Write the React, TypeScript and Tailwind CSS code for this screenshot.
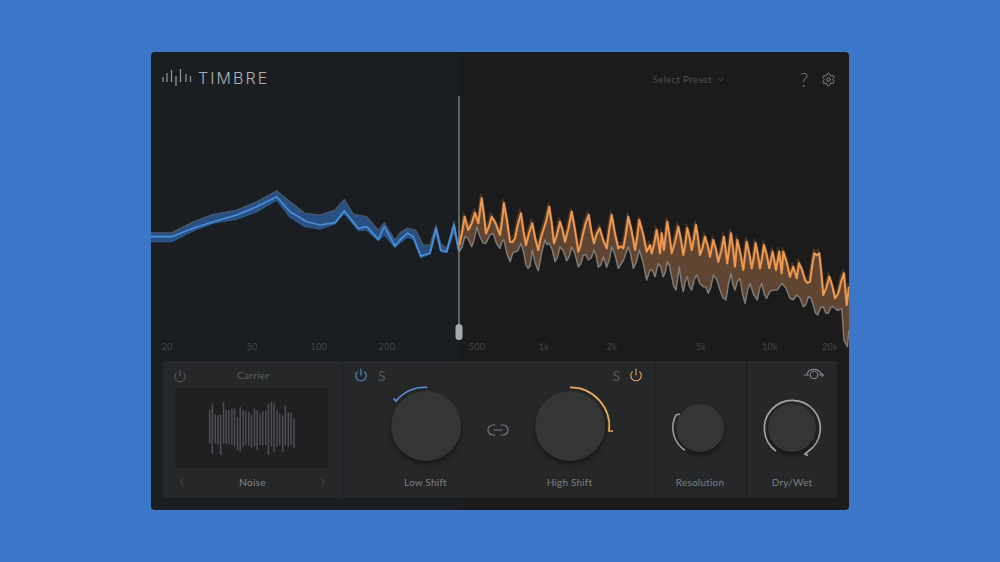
import React from 'react';
import { ChevronDown, ChevronLeft, ChevronRight, Link2, Power, Settings } from 'lucide-react';

type Pt = number[];

// traced from the reference at 3x: each block has its own crop origin
const scale = (ox: number, oy: number, pts: Pt[]) => pts.map(([x, y]) => [ox + x / 3, oy + y / 3]);
const line = (pts: Pt[]) => pts.map(([x, y]) => `${x.toFixed(1)},${y.toFixed(1)}`).join(' ');
const band = (a: Pt[], b: Pt[]) => line([...a, ...[...b].reverse()]);

// small wiggle between traced points, the real curve is busier than the trace
const busy = (pts: Pt[], amount: number) =>
  pts.flatMap((p, i) => {
    const next = pts[i + 1];
    if (!next || next[0] - p[0] < 4) return [p];
    return [p, [(p[0] + next[0]) / 2, (p[1] + next[1]) / 2 + (i % 2 ? -amount : amount)]];
  });

const blueTop = scale(150, 180, [[0,158],[65,158],[130,125],[190,103],[260,90],[320,65],[380,32],[420,65],[465,100],[510,105],[555,90],[583,58],[610,102],[650,110],[685,150],[703,128],[735,180],[750,158],[772,145],[797,150],[820,195],[840,195],[858,135],[872,190],[890,205],[912,125],[925,200]]);
const blueMid = scale(150, 180, [[0,170],[65,170],[130,145],[190,125],[260,105],[320,80],[380,50],[420,95],[470,125],[510,135],[555,128],[583,92],[625,145],[650,140],[685,178],[703,140],[735,198],[750,180],[772,160],[790,170],[812,228],[840,220],[858,145],[872,210],[890,215],[912,135],[926,210]]);
const blueLow = scale(150, 180, [[0,185],[65,185],[130,152],[190,130],[260,118],[320,95],[380,60],[420,112],[465,140],[510,147],[555,132],[583,100],[625,152],[650,150],[685,182],[703,165],[735,203],[750,188],[772,172],[790,178],[812,233],[840,222],[858,160],[872,215],[890,218],[912,155],[926,215]]);

const orange = busy([
  ...scale(450, 180, [[28,195],[44,110],[55,150],[75,98],[85,130],[95,55],[108,160],[125,110],[150,165],[162,70],[180,185],[195,175],[213,100],[228,195],[247,130],[265,210],[280,150],[298,80],[312,190],[330,125],[345,185],[365,95],[385,215],[398,165],[416,105],[432,190],[449,145],[470,205],[485,105],[505,205],[520,205],[535,110],[555,210],[568,120],[590,215]]),
  ...scale(650, 220, [[0,75],[5,100],[20,30],[30,100],[35,40],[42,90],[52,5],[65,100],[85,20],[100,105],[112,25],[125,90],[138,15],[150,105],[165,50],[180,110],[190,60],[205,125],[222,50],[232,130],[243,40],[255,140],[262,60],[280,150],[290,65],[305,145],[317,70],[330,145],[342,75],[358,145],[368,95],[378,150],[388,95],[395,160],[400,95],[420,170],[430,140],[440,175],[447,130],[465,180],[480,185],[493,100],[508,100],[520,225],[538,170],[555,235],[565,220],[582,160],[590,255],[597,200]]),
], 2);
const grey = busy([
  ...scale(450, 180, [[28,215],[44,170],[65,200],[80,140],[90,170],[108,190],[130,160],[150,205],[162,180],[180,245],[195,215],[213,190],[228,255],[240,258],[247,210],[265,272],[285,180],[298,190],[315,245],[330,200],[350,242],[365,200],[385,260],[400,225],[415,240],[432,210],[445,262],[460,230],[470,262],[485,200],[505,265],[535,200],[550,265],[568,210],[590,300]]),
  ...scale(650, 220, [[0,150],[15,170],[25,130],[40,170],[52,125],[65,170],[78,210],[88,140],[100,215],[112,170],[125,210],[140,165],[160,200],[175,220],[190,165],[210,210],[228,240],[243,160],[255,210],[270,175],[285,250],[300,190],[322,240],[335,190],[350,235],[370,210],[395,190],[420,235],[440,225],[460,260],[475,230],[490,255],[503,285],[520,260],[535,280],[550,260],[575,265],[582,360],[592,380],[597,330]]),
], 3);

const axis: [string, number][] = [['20', 167], ['50', 252], ['100', 319], ['200', 387], ['500', 477], ['1k', 544], ['2k', 612], ['5k', 701], ['10k', 770], ['20k', 830]];

const wave = [[180,165,265],[188,148,295],[197,178,265],[205,180,268],[213,178,300],[222,140,265],[230,165,265],[238,165,268],[247,160,270],[255,160,275],[264,185,285],[272,155,290],[281,165,275],[289,168,270],[298,170,272],[306,178,280],[315,160,275],[323,165,285],[332,175,270],[340,168,272],[349,165,270],[357,145,300],[366,140,275],[374,145,290],[383,165,275],[391,175,270],[400,180,290],[408,150,270],[417,172,275],[425,172,270],[434,190,280]];

const logoBars = [[1,8,13],[5,4,13],[9.5,1,13],[14,7,17],[18.5,0,13],[24,5,13],[28.5,7,13]];

const Spectrum = () => (
  <svg viewBox="151 96 698 265" width={698} height={265} className="block">
    <defs>
      <filter id="soft" x="-5%" y="-5%" width="110%" height="110%">
        <feGaussianBlur stdDeviation="0.6" />
      </filter>
    </defs>
    <g filter="url(#soft)" fill="none" strokeLinejoin="round">
      <polygon points={band(blueTop, blueLow)} fill="#2b5082" />
      <polyline points={line(blueTop)} stroke="#4e5a66" strokeWidth="1.1" />
      <polyline points={line(blueLow)} stroke="#2d5c94" strokeWidth="1.1" />
      <polyline points={line(blueMid)} stroke="#4a8fdc" strokeWidth="1.7" />

      <polygon points={band(orange, grey)} fill="#5f4430" />
      <polyline points={line(orange)} stroke="#7a5232" strokeWidth="1.6" transform="translate(-1 -4)" opacity="0.45" />
      <polyline points={line(grey)} stroke="#7f7b76" strokeWidth="1.5" />
      <polyline points={line(orange)} stroke="#b8743c" strokeWidth="3" opacity="0.4" />
      <polyline points={line(orange)} stroke="#ee9a52" strokeWidth="1.9" />
    </g>
    <line x1="459" y1="96" x2="459" y2="326" stroke="#a3a7aa" strokeWidth="1" />
    <rect x="455.5" y="324" width="7" height="16" rx="3.5" fill="#a7abae" />
    {axis.map(([label, x]) => (
      <text key={label} x={x} y="350" textAnchor="middle" fontSize="9" letterSpacing="0.4" fill="#434548" fontFamily="Lato, sans-serif">
        {label}
      </text>
    ))}
  </svg>
);

const Knob = ({ size, arc, color, label, labelGap }: { size: string; arc: string; color: string; label: string; labelGap: string }) => (
  <div className="flex w-[90px] flex-col items-center">
    <div className="relative flex h-[90px] w-[90px] items-center justify-center">
      <div className={`${size} rounded-full bg-[#343537] shadow-[0_3px_5px_rgba(0,0,0,0.45)]`} />
      <svg viewBox="0 0 90 90" className="absolute inset-0 h-full w-full" fill="none" stroke={color} strokeWidth="1.7">
        <path d={arc} />
      </svg>
    </div>
    <div className={`${labelGap} h-[14px] text-[10px] leading-[14px] tracking-[0.02em] text-[#7d7f82]`}>{label}</div>
  </div>
);

export default function App() {
  return (
    <div className="flex h-[562px] w-[1000px] items-center justify-center overflow-hidden bg-[#3b76c9] font-['Lato',sans-serif]">
      <div className="h-[458px] w-[698px] overflow-hidden rounded-[4px] bg-[linear-gradient(90deg,#1a1d22_308px,#1c1b1c_308px)]">
        {/* Header */}
        <div className="flex h-[44px] items-center pl-[11px] pr-[13px] pt-[8px]">
          <svg width="30" height="18" viewBox="0 0 30 18" stroke="#8f9193" strokeWidth="1.3">
            {logoBars.map(([x, y1, y2]) => (
              <line key={x} x1={x} x2={x} y1={y1} y2={y2} />
            ))}
          </svg>
          <span className="ml-[6px] font-['Inter',sans-serif] text-[16px] font-light tracking-[0.13em] text-[#aeb0b3]">TIMBRE</span>
          <div className="ml-auto mt-[3px] flex items-center gap-[3px] text-[10px] tracking-[0.02em] text-[#4b4c4e]">
            Select Preset
            <ChevronDown size={11} strokeWidth={1.5} className="text-[#5c5d5f]" />
          </div>
          <span className="ml-[73px] mt-[2px] w-[10px] text-center text-[19px] font-light leading-none text-[#77797b]">?</span>
          <Settings size={15} strokeWidth={1.5} className="ml-[12px] mt-[2px] text-[#8a8c8e]" />
        </div>

        <Spectrum />

        {/* Controls */}
        <div className="flex h-[137px] gap-px px-[12px]">
          <div className="w-[179px] bg-[#252729]">
            <div className="flex h-[27px] items-center px-[10px] pt-[2px]">
              <Power size={14} strokeWidth={1.6} className="text-[#606265]" />
              <span className="ml-[50px] text-[10px] tracking-[0.03em] text-[#5c5e61]">Carrier</span>
            </div>
            <div className="ml-[12px] flex h-[80px] w-[153px] items-center justify-center bg-[#1f2022]">
              <svg viewBox="175 135 265 170" width="88" height="57" stroke="#4d4f52" strokeWidth="4.5">
                {wave.map(([x, y1, y2]) => (
                  <line key={x} x1={x} x2={x} y1={y1} y2={y2} />
                ))}
              </svg>
            </div>
            <div className="mt-[6px] flex h-[16px] items-center justify-between px-[13px] text-[10px] tracking-[0.03em] text-[#85878a]">
              <ChevronLeft size={12} strokeWidth={1.6} className="text-[#55575a]" />
              Noise
              <ChevronRight size={12} strokeWidth={1.6} className="text-[#55575a]" />
            </div>
          </div>

          <div className="w-[311px] bg-[#252729]">
            <div className="flex h-[20px] items-center pl-[11px] pr-[11px] pt-[8px]">
              <Power size={14} strokeWidth={1.9} className="text-[#4f8fd6]" />
              <span className="ml-[10px] text-[14px] text-[#54565a]">S</span>
              <span className="ml-auto text-[14px] text-[#54565a]">S</span>
              <Power size={14} strokeWidth={1.9} className="ml-[9px] text-[#e9a35c]" />
            </div>
            <div className="flex justify-center gap-[13px] pr-[2px]">
              <Knob size="h-[70px] w-[70px]" color="#5b93d8" label="Low Shift" labelGap="mt-[4px]" arc="M46.3 6.3A39 39 0 0 0 15 20L12.5 17.5" />
              <div className="flex h-[98px] w-[28px] items-center justify-center">
                <Link2 size={24} strokeWidth={1.2} className="text-[#77797c]" />
              </div>
              <Knob size="h-[70px] w-[70px]" color="#e9a860" label="High Shift" labelGap="mt-[4px]" arc="M45 6.3A39 39 0 0 1 84 50L88 50" />
            </div>
          </div>

          <div className="flex w-[91px] flex-col items-center bg-[#252729] pr-px pt-[22px]">
            <Knob size="h-[48px] w-[48px]" color="#96989a" label="Resolution" labelGap="mt-[2px]" arc="M30 67.3A27 27 0 0 1 21 32L25 31" />
          </div>

          <div className="relative flex w-[90px] flex-col items-center bg-[#252729] pt-[22px]">
            <Knob size="h-[48px] w-[48px]" color="#a0a2a4" label="Dry/Wet" labelGap="mt-[2px]" arc="M29 68A28 28 0 1 1 61 68.5L58 71L61 72.5" />
            <svg width="22" height="16" viewBox="0 0 22 16" fill="none" stroke="#85878a" strokeWidth="1.1" className="absolute right-[12px] top-[6px]">
              <circle cx="11" cy="8" r="3.8" />
              <path d="M1 8H6M16 8H20M18.4 6.4L20.4 8L18.4 9.6M4.2 7A7 6 0 0 1 17.8 7" />
            </svg>
          </div>
        </div>
      </div>
    </div>
  );
}
